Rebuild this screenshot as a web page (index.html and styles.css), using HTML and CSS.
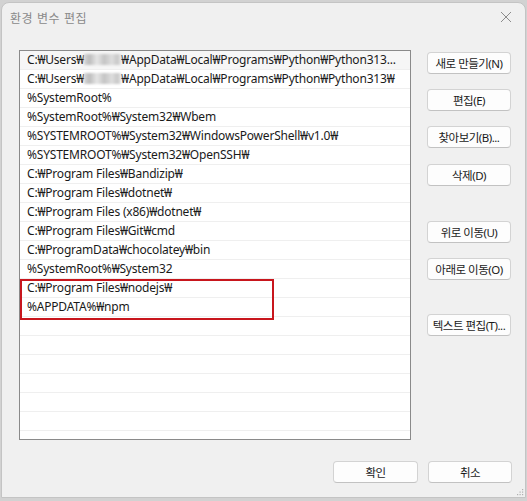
FILE: index.html
```html
<!DOCTYPE html>
<html lang="ko">
<head>
<meta charset="utf-8">
<title>환경 변수 편집</title>
<link rel="stylesheet" href="styles.css">
</head>
<body>
<div class="window">
  <div class="titlebar">
    <span class="title">환경 변수 편집</span>
    <svg class="close" width="12" height="12" viewBox="0 0 12 12"><path d="M1 1 L11 11 M11 1 L1 11" stroke="#8c8c8c" stroke-width="1" fill="none"/></svg>
  </div>
  <div class="content">
    <div class="main">
      <div class="list">
        <div class="row sel"><span class="txt">C:₩Users₩<span class="blur"></span>₩AppData₩Local₩Programs₩Python₩Python313...</span></div>
        <div class="row"><span class="txt">C:₩Users₩<span class="blur"></span>₩AppData₩Local₩Programs₩Python₩Python313₩</span></div>
        <div class="row"><span class="txt">%SystemRoot%</span></div>
        <div class="row"><span class="txt">%SystemRoot%₩System32₩Wbem</span></div>
        <div class="row"><span class="txt">%SYSTEMROOT%₩System32₩WindowsPowerShell₩v1.0₩</span></div>
        <div class="row"><span class="txt">%SYSTEMROOT%₩System32₩OpenSSH₩</span></div>
        <div class="row"><span class="txt">C:₩Program Files₩Bandizip₩</span></div>
        <div class="row"><span class="txt">C:₩Program Files₩dotnet₩</span></div>
        <div class="row"><span class="txt">C:₩Program Files (x86)₩dotnet₩</span></div>
        <div class="row"><span class="txt">C:₩Program Files₩Git₩cmd</span></div>
        <div class="row"><span class="txt">C:₩ProgramData₩chocolatey₩bin</span></div>
        <div class="row"><span class="txt">%SystemRoot%₩System32</span></div>
        <div class="row"><span class="txt">C:₩Program Files₩nodejs₩</span></div>
        <div class="row"><span class="txt">%APPDATA%₩npm</span></div>
        <div class="row"></div>
        <div class="row"></div>
        <div class="row"></div>
        <div class="row"></div>
        <div class="row"></div>
        <div class="row"></div>
        <div class="row"></div>
        <div class="highlight"></div>
      </div>
      <div class="side">
        <button class="btn b-new">새로 만들기(N)</button>
        <button class="btn b-edit">편집(E)</button>
        <button class="btn b-browse">찾아보기(B)...</button>
        <button class="btn b-del">삭제(D)</button>
        <button class="btn b-up">위로 이동(U)</button>
        <button class="btn b-down">아래로 이동(O)</button>
        <button class="btn b-text">텍스트 편집(T)...</button>
      </div>
    </div>
    <div class="footer">
      <button class="btn ok">확인</button>
      <button class="btn cancel">취소</button>
    </div>
  </div>
  <svg class="grip" width="7" height="7" viewBox="0 0 7 7"><g fill="#b0b0b0"><rect x="5" y="0" width="1.2" height="1.2"/><rect x="2.5" y="2.5" width="1.2" height="1.2"/><rect x="5" y="2.5" width="1.2" height="1.2"/><rect x="0" y="5" width="1.2" height="1.2"/><rect x="2.5" y="5" width="1.2" height="1.2"/><rect x="5" y="5" width="1.2" height="1.2"/></g></svg>
</div>
</body>
</html>
```
FILE: styles.css
```css
* { box-sizing: border-box; }
html, body { margin: 0; padding: 0; }
body {
  width: 527px;
  height: 501px;
  overflow: hidden;
  background: #d2d2d2;
  font-family: "Noto Sans", "Noto Sans CJK KR", sans-serif;
  font-size: 12px;
  color: #1a1a1a;
}
.window {
  position: relative;
  margin: 2px 1px 0 1px;
  width: 525px;
  height: 496px;
  background: #f0f0f0;
  border: 1px solid #c4c4c4;
  border-radius: 8px 8px 0 0;
  display: flex;
  flex-direction: column;
}
.titlebar {
  height: 30px;
  display: flex;
  align-items: center;
  justify-content: space-between;
  padding: 0 13px 2px 8px;
}
.title {
  font-family: "Noto Sans CJK KR", sans-serif;
  color: #8a8a8a;
  font-size: 12px;
  letter-spacing: 0.5px;
}
.content {
  padding: 17px 0 0 17px;
  display: flex;
  flex-direction: column;
}
.main {
  display: flex;
}
.list {
  position: relative;
  width: 392px;
  height: 390px;
  background: #ffffff;
  border: 1px solid #8a8a8a;
  overflow: hidden;
}
.row {
  height: 19px;
  border-bottom: 1px solid #efefef;
  padding: 0 4px 0 7px;
  display: flex;
  align-items: center;
  white-space: nowrap;
  letter-spacing: -0.2px;
}
.row.sel { background: #f6f6f6; }
.txt {
  display: block;
  white-space: nowrap;
  line-height: 18px;
}
.blur {
  display: inline-block;
  width: 37px;
  height: 11px;
  vertical-align: -1px;
  background: linear-gradient(90deg, #d6d6d6 0%, #bdbdbd 15%, #e6e6e6 35%, #c4c4c4 55%, #dedede 75%, #c8c8c8 90%, #e4e4e4 100%);
  filter: blur(1px);
}
.highlight {
  position: absolute;
  left: 0;
  top: 228px;
  width: 254px;
  height: 41px;
  border: 2px solid #c8161d;
}
.side {
  display: flex;
  flex-direction: column;
  align-items: flex-start;
  margin-left: 16px;
  padding-top: 2px;
}
.btn {
  width: 84px;
  height: 22px;
  padding: 0;
  font-family: "Noto Sans", "Noto Sans CJK KR", sans-serif;
  font-size: 11.5px;
  color: #1a1a1a;
  background: #fdfdfd;
  border: 1px solid #d3d3d3;
  border-bottom-color: #c2c2c2;
  border-radius: 4px;
  white-space: nowrap;
  text-align: center;
  letter-spacing: -0.5px;
  overflow: hidden;
}
.b-edit, .b-browse, .b-down { margin-top: 15px; }
.b-del { margin-top: 16px; }
.b-up { margin-top: 35px; }
.b-text { margin-top: 34px; }
.footer {
  display: flex;
  justify-content: flex-end;
  gap: 10px;
  margin-top: 21px;
  padding-right: 13px;
}
.footer .ok { width: 85px; }
.grip {
  position: absolute;
  right: 1px;
  bottom: 1px;
}
```
